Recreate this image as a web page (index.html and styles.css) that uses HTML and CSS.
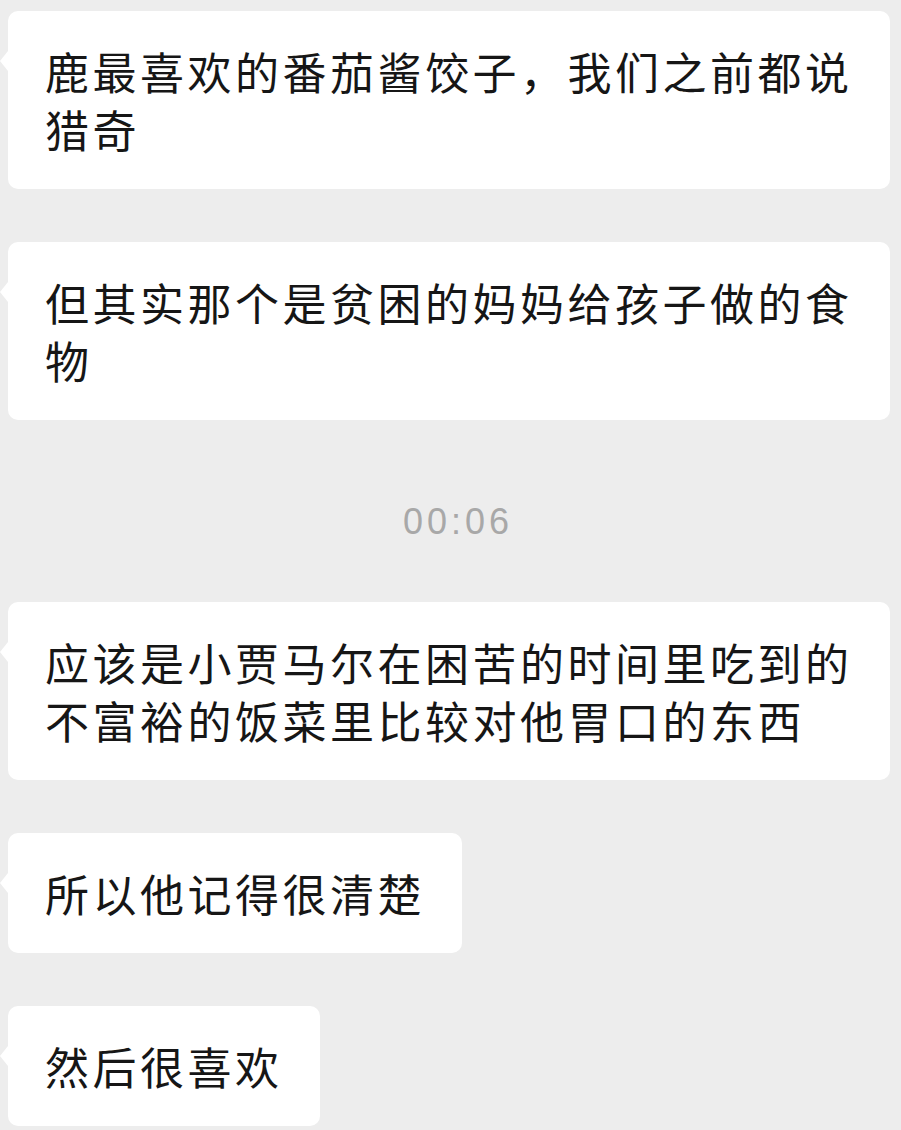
FILE: index.html
```html
<!DOCTYPE html>
<html lang="zh-CN">
<head>
  <meta charset="UTF-8">
  <meta name="viewport" content="width=device-width, initial-scale=1.0">
  <title>聊天记录</title>
  <link rel="stylesheet" href="styles.css">
</head>
<body>
  <div class="chat">
    <div class="msg">
      <div class="bubble">鹿最喜欢的番茄酱饺子，我们之前都说猎奇</div>
    </div>
    <div class="msg">
      <div class="bubble">但其实那个是贫困的妈妈给孩子做的食物</div>
    </div>

    <div class="time">00:06</div>

    <div class="msg">
      <div class="bubble">应该是小贾马尔在困苦的时间里吃到的不富裕的饭菜里比较对他胃口的东西</div>
    </div>
    <div class="msg">
      <div class="bubble">所以他记得很清楚</div>
    </div>
    <div class="msg">
      <div class="bubble">然后很喜欢</div>
    </div>
  </div>
</body>
</html>
```

FILE: styles.css
```css
html, body {
  margin: 0;
  padding: 0;
  background-color: #ededed;
}
body {
  font-family: "Noto Sans CJK SC", "Noto Sans", sans-serif;
  color: #161616;
}
.chat {
  display: flex;
  flex-direction: column;
  gap: 53px;
  padding: 11px 11px 0 8px;
}
.msg {
  display: flex;
}
.bubble {
  position: relative;
  max-width: 808px;
  padding: 31px 37px;
  background-color: #fff;
  border-radius: 10px;
  font-size: 44px;
  line-height: 58px;
  letter-spacing: 3.5px;
}
/* little arrow on the left side of each bubble */
.bubble::before {
  content: "";
  position: absolute;
  left: -8px;
  top: 40px;
  border-top: 10px solid transparent;
  border-bottom: 10px solid transparent;
  border-right: 8px solid #fff;
}
.time {
  text-align: center;
  font-family: "Liberation Sans", Arial, sans-serif;
  font-size: 36px;
  letter-spacing: 4px;
  color: #a8a8a8;
  line-height: 44px;
  margin: 27px 0 5px;
  padding-left: 18px;
}
```
